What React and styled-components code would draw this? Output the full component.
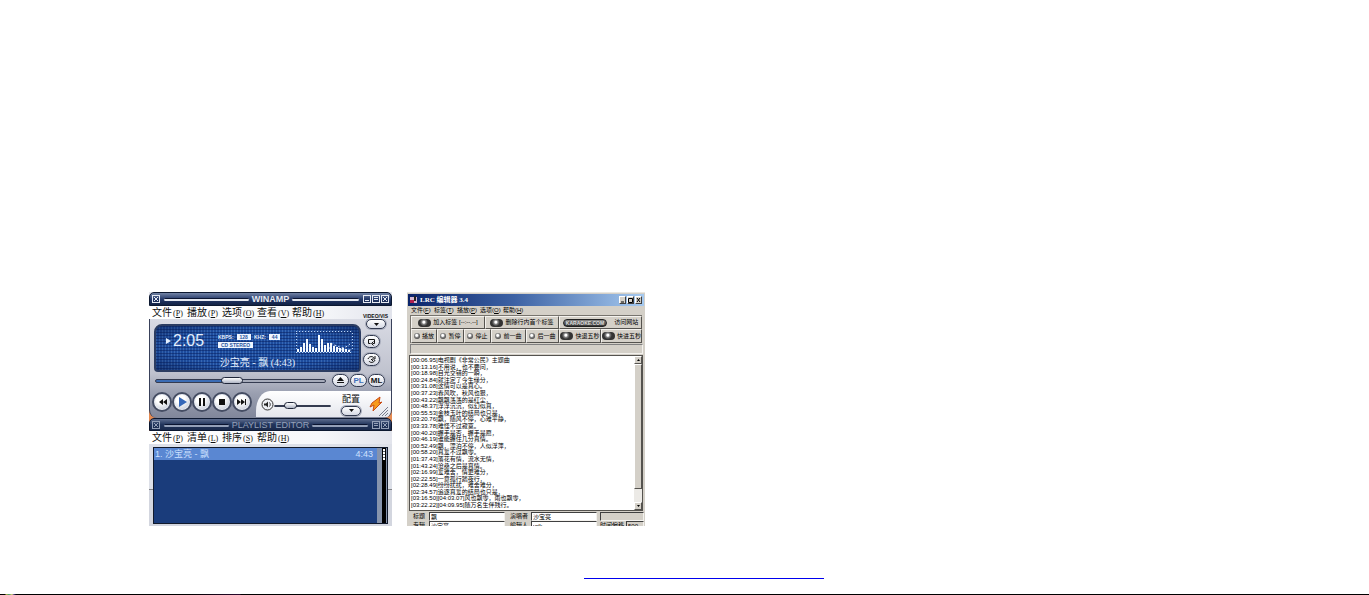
import React from 'react';
import styled, { createGlobalStyle } from 'styled-components';

const GlobalStyle = createGlobalStyle`
  * {
    box-sizing: border-box;
  }
  body {
    margin: 0;
    background-color: #FFF;
  }
  button {
    margin: 0;
    padding: 0;
    border: 0;
    background: none;
    font: inherit;
    color: inherit;
    cursor: pointer;
  }
`;

const Page = styled.div`
  min-height: 100vh;
  display: flex;
  flex-direction: column;
`;

const Gallery = styled.main`
  display: flex;
  gap: 15px;
  padding: 292px 110px 0 149px;
`;

const PageFooter = styled.footer`
  display: flex;
  justify-content: center;
  padding: 36px 110px 0 149px;
`;

const FooterLink = styled.a`
  width: 240px;
  height: 17px;
  border-bottom: 1px solid #0000EE;
`;

const BottomLine = styled.div`
  height: 1px;
  margin-top: auto;
  background:
    linear-gradient(90deg, transparent 5px, #B7A53A 6px, #3E9A6C 9px, #D8D070 12px, #4A3A8A 14px, transparent 16px),
    linear-gradient(90deg, #000 190px, #2A0A2E 240px, #000 241px);
`;

/* player */

const Player = styled.section`
  flex: 0 0 243px;
  height: 234px;
  display: grid;
  grid-template-rows: 14px 13px 99px 13px 13px 1fr;
  overflow: hidden;
  background: linear-gradient(#E3E5EC 60px, #E48A52 60px);
  font-family: 'Liberation Serif', 'Noto Sans CJK SC', serif;
  font-size: 10px;
  color: #111;
`;

const TitleBar = styled.header`
  display: grid;
  grid-template-columns: 1fr auto 1fr;
  align-items: center;
  gap: 3px;
  padding: 0 2px;
  border: 1px solid #0C1830;
  border-radius: 5px 5px 0 0;
  background: ${props => props.dim ?
    'linear-gradient(#5C6C8E, #22355C 50%, #1A2A4C)' :
    'linear-gradient(#7384A6, #25396A 50%, #122244)'};
  color: ${props => props.dim ? '#94A0B8' : '#E6EAF2'};
`;

const TitleSide = styled.div`
  display: flex;
  align-items: center;
  gap: 4px;
`;

const TitleText = styled.h2`
  margin: 0;
  font-family: 'Liberation Sans', sans-serif;
  font-size: 9px;
  line-height: 12px;
  font-weight: ${props => props.dim ? 'normal' : 'bold'};
`;

const TitleRule = styled.span`
  flex: 1;
  height: 3px;
  border-radius: 2px;
  border-top: 1px solid #0A1430;
  background-color: currentColor;
`;

const TitleButton = styled.button`
  display: flex;
`;

const TitleButtons = styled.div`
  display: flex;
  gap: 1px;
`;

const MenuRow = styled.div`
  display: flex;
  justify-content: space-between;
  background: linear-gradient(90deg, #FFF, #F6F7FA 70%, #E2E4EC);
`;

const Menu = styled.nav`
  display: grid;
  grid-template-columns: repeat(5, 35px);
  padding-left: 3px;
  line-height: 13px;

  span {
    margin-left: 1px;
    font-size: 8px;
  }
`;

const MenuButton = styled.button`
  text-align: left;
  white-space: nowrap;
`;

const VideoLabel = styled.span`
  align-self: end;
  padding-right: 4px;
  font-family: 'Liberation Sans', sans-serif;
  font-size: 5px;
  line-height: 6px;
  font-weight: bold;
`;

const Body = styled.div`
  display: grid;
  grid-template-rows: 53px 17px 29px;
  overflow: hidden;
  border: solid #39415A;
  border-width: 0 1px;
  border-radius: 0 0 8px 8px;
  background: linear-gradient(#D9DBE4, #BFC2CE 55%, #9A9FB0 75%, #80869A);
`;

const Upper = styled.div`
  display: grid;
  grid-template-columns: 1fr 30px;
`;

const Display = styled.div`
  display: grid;
  grid-template-columns: 58px 1fr 66px;
  grid-template-rows: 30px 14px;
  margin: 5px 0 0 4px;
  border: 2px solid #2C3D62;
  border-radius: 8px 8px 4px 4px;
  background-color: #1D4C9E;
  background-image:
    radial-gradient(ellipse, transparent 60%, rgba(8, 24, 70, .5)),
    linear-gradient(rgba(6, 28, 90, .5) 1px, transparent 1px),
    linear-gradient(90deg, rgba(80, 130, 200, .5) 1px, transparent 1px);
  background-size: auto, 3px 3px, 3px 3px;
  color: #E4F0FF;
`;

const Clock = styled.div`
  display: flex;
  align-items: center;
  gap: 2px;
  padding-left: 10px;
  font-family: 'Liberation Sans', sans-serif;
  font-size: 16px;
  line-height: 18px;
`;

const Rates = styled.div`
  display: grid;
  align-content: center;
  gap: 2px;
  padding-left: 4px;
  font-family: 'Liberation Sans', sans-serif;
  font-size: 5px;
  line-height: 6px;
  font-weight: bold;
`;

const RateLine = styled.div`
  display: flex;
  gap: 3px;
  white-space: nowrap;
`;

const Chip = styled.span`
  padding: 0 3px;
  background-color: #F0F6FF;
  color: #2A55A0;
`;

const Scope = styled.div`
  padding-top: 4px;
`;

const Track = styled.div`
  grid-column: 1 / -1;
  text-align: center;
  line-height: 13px;
`;

const Side = styled.div`
  display: flex;
  flex-direction: column;
  align-items: center;
  gap: 6px;
`;

const SideGroup = styled.div`
  align-self: start;
  display: grid;
  gap: 5px;
  padding-left: 2px;
`;

const PillButton = styled.button`
  width: ${props => props.wide ? '20px' : '17px'};
  height: ${props => props.wide ? '10px' : '13px'};
  display: flex;
  align-items: center;
  justify-content: center;
  border: 1px solid #30384E;
  border-radius: 7px;
  background: linear-gradient(#FFF, #D5D9E4);
  box-shadow: 0 0 0 1px #A9AEBD;
  font-family: 'Liberation Sans', sans-serif;
  font-size: 8px;
  line-height: 8px;
  font-weight: bold;
  color: ${props => props.blue ? '#3F6EB8' : '#111'};
`;

const SeekRow = styled.div`
  display: grid;
  grid-template-columns: 1fr auto;
  align-items: center;
  gap: 6px;
  padding: 0 6px 0 5px;
`;

const Slider = styled.input`
  width: 100%;
  height: 10px;
  margin: 0;
  appearance: none;
  background: none;

  &::-webkit-slider-runnable-track {
    height: ${props => props.seek ? '4px' : '2px'};
    border: 1px solid #343B50;
    border-radius: 2px;
    background: ${props => props.seek ?
      'linear-gradient(90deg, #3B6CB4 45%, #A6ABBA 45%)' :
      '#343B50'};
  }
  &::-webkit-slider-thumb {
    appearance: none;
    width: ${props => props.seek ? '22px' : '13px'};
    height: 7px;
    margin-top: ${props => props.seek ? '-3px' : '-4px'};
    border: 1px solid #20273A;
    border-radius: 4px;
    background: linear-gradient(#FFF, #AEB4C4);
  }
`;

const PillGroup = styled.div`
  display: flex;
  gap: 1px;
`;

const Controls = styled.div`
  display: grid;
  grid-template-columns: 106px 1fr;
`;

const Transport = styled.div`
  display: flex;
  align-items: center;
  padding: 0 0 4px 2px;
`;

const RoundButton = styled.button`
  width: 20px;
  height: 20px;
  flex: none;
  display: flex;
  align-items: center;
  justify-content: center;
  border: 2px solid #454D63;
  border-radius: 50%;
  background: radial-gradient(circle at 40% 30%, #FFF 30%, #AEB6C8);
  box-shadow: inset 0 0 0 1px #E9ECF3;
`;

const Tray = styled.div`
  display: grid;
  grid-template-columns: 13px 57px 30px 1fr;
  align-items: center;
  margin: 2px 0 1px;
  padding-left: 5px;
  border-top-left-radius: 14px 20px;
  background: linear-gradient(#FFF, #E4E6ED);
`;

const VolumeBox = styled.div`
  padding-top: 6px;
`;

const Config = styled.div`
  display: flex;
  flex-direction: column;
  align-items: center;
  padding-left: 10px;
  font-size: 9px;
  line-height: 13px;
  white-space: nowrap;
`;

const PlaylistFrame = styled.div`
  padding: 3px 4px 0;
  background: linear-gradient(#DDE0E8 45px, #333 45px, #D3D6DF 46px);
`;

const Playlist = styled.div`
  height: 77px;
  display: grid;
  grid-template-columns: 1fr 10px;
  border: 1px solid #111A2C;
  background-color: #1A3C7B;
`;

const Songs = styled.ol`
  margin: 0;
  padding: 0;
  list-style: none;
  font-family: 'Liberation Sans', 'Noto Sans CJK SC', sans-serif;
  font-size: 9px;
  line-height: 12px;
`;

const Song = styled.li`
  display: flex;
  justify-content: space-between;
  padding: 0 4px 0 1px;
  background-color: #5A87D2;
  color: #CFE2FF;
`;

const PlaylistScroll = styled.div`
  border-left: 5px solid #8794AC;
  border-right: 1px solid #8794AC;
  background-color: #000;
`;

const PlaylistThumb = styled.div`
  height: 13px;
  border: 1px solid #000;
  background: repeating-linear-gradient(#FFF 0 2px, #59616F 2px 3px);
`;

/* lyrics editor */

const Editor = styled.section`
  flex: 0 0 238px;
  height: 234px;
  display: grid;
  grid-template-columns: 100%;
  grid-template-rows: 12px 9px 28px 12px 156px 9px 9px;
  overflow: hidden;
  padding: 1px 1px 0;
  border-top: 1px solid #E9E7E1;
  background-color: #D4D0C8;
  font-family: 'Liberation Sans', 'Noto Sans CJK SC', sans-serif;
  font-size: 6px;
  line-height: 9px;
  color: #000;
`;

const EditorTitle = styled.header`
  display: flex;
  align-items: center;
  gap: 3px;
  padding: 0 2px;
  background: linear-gradient(90deg, #0A246A, #3D62A4 45%, #A6CAF0);
  color: #FFF;
`;

const EditorName = styled.h2`
  flex: 1;
  margin: 0;
  font-family: 'Liberation Serif', 'Noto Sans CJK SC', serif;
  font-size: 7px;
  line-height: 11px;
`;

const WindowButton = styled.button`
  width: 7px;
  height: 8px;
  display: flex;
  border: 1px solid;
  border-color: #FFF #404040 #404040 #FFF;
  background-color: #D4D0C8;
`;

const EditorMenu = styled.nav`
  display: grid;
  grid-template-columns: repeat(5, 23px);
  padding-left: 3px;
`;

const Toolbar = styled.div`
  display: grid;
  grid-template-rows: 13px 14px;
  margin: 0 2px;
  border: 1px solid #77746E;
  border-width: 1px 0 0 1px;
`;

const ToolRow = styled.div`
  display: grid;
  grid-template-columns: ${props => props.columns};
`;

const Tool = styled.button`
  min-width: 0;
  display: flex;
  align-items: center;
  justify-content: center;
  gap: 2px;
  border: 1px solid;
  border-color: #F4F2EE #55534F #55534F #F4F2EE;
  white-space: nowrap;
`;

const Knob = styled.span`
  flex: none;
  width: ${props => props.wide ? '13px' : '6px'};
  height: ${props => props.wide ? '8px' : '6px'};
  border-radius: 4px;
  background: radial-gradient(circle at 45% 40%, #FFF 1px, #8A8A8A 2px, #333 4px);
`;

const Badge = styled.span`
  margin-right: 5px;
  padding: 0 2px;
  border: 1px solid #222;
  border-radius: 4px;
  background: linear-gradient(#888, #333);
  font-size: 5px;
  line-height: 6px;
  font-weight: bold;
  color: #DDD;
`;

const Status = styled.div`
  margin: 1px 1px 1px 2px;
  border: 1px solid;
  border-color: #808080 #F4F2EE #F4F2EE #808080;
`;

const EditArea = styled.div`
  display: grid;
  grid-template-columns: 1fr 8px;
  margin: 0 1px;
  border: 1px solid #55534F;
  background-color: #FFF;
`;

const Lyrics = styled.textarea`
  display: block;
  width: 100%;
  height: 100%;
  margin: 0;
  padding: 1px 0 0 1px;
  border: 0;
  outline: 0;
  resize: none;
  overflow: hidden;
  background: none;
  font-family: 'Liberation Sans', 'Noto Sans CJK SC', sans-serif;
  font-size: 6px;
  line-height: 1.1;
  white-space: pre;
  color: #000;
`;

const Scroll = styled.div`
  display: grid;
  grid-template-rows: 8px 125px 1fr 8px;
  background-color: #ECEAE6;
`;

const ScrollButton = styled.button`
  display: flex;
  align-items: center;
  justify-content: center;
  border: 1px solid;
  border-color: #FFF #55534F #55534F #FFF;
  background-color: #D4D0C8;
`;

const ScrollThumb = styled.div`
  border: 1px solid;
  border-color: #FFF #55534F #55534F #FFF;
  background-color: #D4D0C8;
`;

const FieldRow = styled.div`
  display: grid;
  grid-template-columns: 21px 76px 26px 66px 1fr;
  padding-top: 1px;
`;

const FieldLabel = styled.label`
  padding-left: 5px;
  line-height: 8px;
  white-space: nowrap;
`;

const Field = styled.input`
  width: 100%;
  min-width: 0;
  height: 9px;
  margin: 0;
  padding: 0 1px;
  border: 1px solid;
  border-color: #404040 #F4F2EE #F4F2EE #404040;
  border-radius: 0;
  background-color: ${props => props.flat ? '#D4D0C8' : '#FFF'};
  font: inherit;
  line-height: 7px;
`;

const Extra = styled.div`
  display: grid;
  grid-template-columns: ${props => props.labelled ? '26px 1fr' : '1fr'};
  padding-left: 3px;
  line-height: 8px;
`;

const lyrics = `[00:06.95]电视剧《非常公民》主题曲
[00:13.16]不用说，也不要问，
[00:18.98]目光交错的一瞬，
[00:24.84]就注定了今生缘分，
[00:31.08]这情可以是真心。
[00:37.23]春风吹，秋风也狠，
[00:43.22]飘飘荡荡的是红尘，
[00:48.37]浮浮沉沉，似幻似真，
[00:55.53]金枝玉叶的结局也只是，
[03:20.76]飘，随风不停，心难平静，
[03:33.78]难怪不过寂寞。
[00:40.20]握手是否，握手是愿，
[00:46.19]谁能握住几分真情。
[00:52.49]飘，漂泊不停，人似浮萍，
[00:58.20]真爱不过飘零。
[01:37.43]落花有情，流水无情，
[01:43.24]沧桑之后是真情。
[02:16.99]爱难舍，情更难分，
[02:22.55]一意孤行踏夜行，
[02:28.49]纷纷扰扰，难舍难分，
[02:34.57]追逐真爱的结局也只是，
[03:16.50][04:03.07]风也飘零，雨也飘零，
[03:22.22][04:09.95]随万名生伴残行。`;

const bars = [3, 5, 9, 13, 8, 5, 4, 17, 13, 7, 9, 9, 6, 5, 4, 4, 3, 2];

const MenuItems = ({ items }) => items.map(([text, key]) => (
  <MenuButton key={text}>{text}<span>(<u>{key}</u>)</span></MenuButton>
));

const Arrow = () => (
  <svg width="5" height="3"><path d="M0 0h5L2.5 3z" fill="currentColor"/></svg>
);

const BoxIcon = ({ path }) => (
  <svg width="8" height="8" fill="none" stroke="currentColor">
    <rect x=".5" y=".5" width="7" height="7"/>
    <path d={path}/>
  </svg>
);

const Spectrum = () => (
  <svg width="62" height="24" fill="#F4FAFF">
    <path d="M3 1.5h56M3.5 3v18M59.5 3v18M3 22.5h56" stroke="#BBD3F4" strokeDasharray="1 2"/>
    <path d="M34 14l4-1 3 2 4 1 3 2 5-1 4-3M36 18h8l5 2h9" fill="none" stroke="#DCE9FF" strokeDasharray="2 2"/>
    {bars.map((height, i) => (
      <rect key={i} x={4 + i * 3} y={22 - height} width="2" height={height}/>
    ))}
  </svg>
);

const transport = [
  ['previous', 'M6 2v6L2 5zM10 2v6L6 5z', '#111'],
  ['play', 'M2 0l8 5-8 5z', '#3567B8'],
  ['pause', 'M2 1h2v8H2zM6 1h2v8H6z', '#111'],
  ['stop', 'M2 2h6v6H2z', '#111'],
  ['next', 'M0 2l4 3-4 3zM4 2l4 3-4 3zM8 2h1v6H8z', '#111']
];

const PlayerWindow = () => (
  <Player>
    <TitleBar>
      <TitleSide>
        <TitleButton aria-label="menu"><BoxIcon path="M2 2l4 4M6 2L2 6"/></TitleButton>
        <TitleRule/>
      </TitleSide>
      <TitleText>WINAMP</TitleText>
      <TitleSide>
        <TitleRule/>
        <TitleButtons>
          <TitleButton aria-label="minimize"><BoxIcon path="M2 5.5h4"/></TitleButton>
          <TitleButton aria-label="shade"><BoxIcon path="M2 2.5h4M2 4.5h4"/></TitleButton>
          <TitleButton aria-label="close"><BoxIcon path="M2 2l4 4M6 2L2 6"/></TitleButton>
        </TitleButtons>
      </TitleSide>
    </TitleBar>
    <MenuRow>
      <Menu>
        <MenuItems items={[['文件', 'P'], ['播放', 'P'], ['选项', 'O'], ['查看', 'V'], ['帮助', 'H']]}/>
      </Menu>
      <VideoLabel>VIDEO/VIS</VideoLabel>
    </MenuRow>
    <Body>
      <Upper>
        <Display>
          <Clock>
            <svg width="5" height="6"><path d="M0 0l5 3-5 3z" fill="currentColor"/></svg>
            2:05
          </Clock>
          <Rates>
            <RateLine>KBPS: <Chip>128</Chip> KHZ: <Chip>44</Chip></RateLine>
            <RateLine><Chip>CD STEREO</Chip></RateLine>
          </Rates>
          <Scope><Spectrum/></Scope>
          <Track>沙宝亮 - 飘 (4:43)</Track>
        </Display>
        <Side>
          <PillButton wide aria-label="video"><Arrow/></PillButton>
          <SideGroup>
            <PillButton aria-label="repeat">
              <svg width="9" height="8" fill="none" stroke="currentColor"><path d="M3.500 5.500h-2v-4h6v4h-2M6.500 3.500l-2 2 2 2"/></svg>
            </PillButton>
            <PillButton aria-label="shuffle">
              <svg width="9" height="9" fill="none" stroke="currentColor"><path d="M1 4C2 1 6 1 7 3M8 1v3H5M8 5C7 8 3 8 2 6M4 4l2 2"/></svg>
            </PillButton>
          </SideGroup>
        </Side>
      </Upper>
      <SeekRow>
        <Slider seek type="range" aria-label="position" defaultValue="44"/>
        <PillGroup>
          <PillButton aria-label="eject">
            <svg width="7" height="7" fill="currentColor"><path d="M3.500 0L7 4H0zM0 5h7v1H0z"/></svg>
          </PillButton>
          <PillButton blue>PL</PillButton>
          <PillButton>ML</PillButton>
        </PillGroup>
      </SeekRow>
      <Controls>
        <Transport>
          {transport.map(([name, path, color]) => (
            <RoundButton key={name} aria-label={name}>
              <svg width="10" height="10"><path d={path} fill={color}/></svg>
            </RoundButton>
          ))}
        </Transport>
        <Tray>
          <svg width="13" height="13" fill="none" stroke="#333">
            <circle cx="6.5" cy="6.5" r="5.5" fill="#EEF0F5"/>
            <path d="M3 5.5h2l2-2v6l-2-2H3z" fill="#222" stroke="none"/>
            <path d="M8.5 4.5c1 1 1 3 0 4"/>
          </svg>
          <VolumeBox>
            <Slider type="range" aria-label="volume" defaultValue="22"/>
          </VolumeBox>
          <Config>
            配置
            <PillButton wide aria-label="config"><Arrow/></PillButton>
          </Config>
          <svg width="28" height="26" viewBox="0 0 28 26">
            <path d="M11 12l8-6-1 6 3-1-9 9 1-6-4 2z" fill="#F79A1C" stroke="#C94A12"/>
            <path d="M18 25l9-9M21 25l6-6M24 25l3-3" stroke="#777D8D"/>
          </svg>
        </Tray>
      </Controls>
    </Body>
    <TitleBar dim>
      <TitleSide>
        <TitleButton aria-label="playlist menu"><BoxIcon path="M2 2l4 4M6 2L2 6"/></TitleButton>
        <TitleRule/>
      </TitleSide>
      <TitleText dim>PLAYLIST EDITOR</TitleText>
      <TitleSide>
        <TitleRule/>
        <TitleButtons>
          <TitleButton aria-label="shade playlist"><BoxIcon path="M2 2.5h4M2 4.5h4"/></TitleButton>
          <TitleButton aria-label="close playlist"><BoxIcon path="M2 2l4 4M6 2L2 6"/></TitleButton>
        </TitleButtons>
      </TitleSide>
    </TitleBar>
    <MenuRow>
      <Menu>
        <MenuItems items={[['文件', 'P'], ['清单', 'L'], ['排序', 'S'], ['帮助', 'H']]}/>
      </Menu>
    </MenuRow>
    <PlaylistFrame>
      <Playlist>
        <Songs>
          <Song><span>1. 沙宝亮 - 飘</span><span>4:43</span></Song>
        </Songs>
        <PlaylistScroll><PlaylistThumb/></PlaylistScroll>
      </Playlist>
    </PlaylistFrame>
  </Player>
);

const EditorWindow = () => (
  <Editor>
    <EditorTitle>
      <svg width="7" height="8"><path d="M0 1h7v6H0z" fill="#D8B8D0"/><path d="M0 4h4v3H0z" fill="#B02050"/><path d="M4 0h2v5H4z" fill="#222"/></svg>
      <EditorName>LRC 编辑器 3.4</EditorName>
      <TitleButtons>
        <WindowButton aria-label="minimize editor"><svg width="5" height="6"><path d="M1 5h3" stroke="#000"/></svg></WindowButton>
        <WindowButton aria-label="maximize editor"><svg width="5" height="6"><path d="M.5 1.5h4v4h-4z" fill="none" stroke="#000"/></svg></WindowButton>
        <WindowButton aria-label="close editor"><svg width="5" height="6"><path d="M1 1l3 4M4 1L1 5" stroke="#000"/></svg></WindowButton>
      </TitleButtons>
    </EditorTitle>
    <EditorMenu>
      <MenuItems items={[['文件', 'F'], ['标签', 'T'], ['播放', 'P'], ['选项', 'O'], ['帮助', 'H']]}/>
    </EditorMenu>
    <Toolbar>
      <ToolRow columns="74px 74px 1fr">
        <Tool><Knob wide/>加入标签 [--:--.--]</Tool>
        <Tool><Knob wide/>删除行内首个标签</Tool>
        <Tool><Badge>KARAOKE.COM</Badge>访问网站</Tool>
      </ToolRow>
      <ToolRow columns="26px 27px 27px 35px 33px 42px 1fr">
        {['播放', '暂停', '停止', '前一曲', '后一曲'].map(text => (
          <Tool key={text}><Knob/>{text}</Tool>
        ))}
        <Tool><Knob wide/>快退五秒</Tool>
        <Tool><Knob wide/>快进五秒</Tool>
      </ToolRow>
    </Toolbar>
    <Status/>
    <EditArea>
      <Lyrics aria-label="lyrics" spellCheck="false" defaultValue={lyrics}/>
      <Scroll>
        <ScrollButton aria-label="scroll up"><svg width="3" height="2"><path d="M0 2h3L1.5 0z"/></svg></ScrollButton>
        <ScrollThumb/>
        <span/>
        <ScrollButton aria-label="scroll down"><svg width="3" height="2"><path d="M0 0h3L1.5 2z"/></svg></ScrollButton>
      </Scroll>
    </EditArea>
    <FieldRow>
      <FieldLabel htmlFor="title">标题</FieldLabel>
      <Field id="title" defaultValue="飘"/>
      <FieldLabel htmlFor="singer">演唱者</FieldLabel>
      <Field id="singer" defaultValue="沙宝亮"/>
      <Extra><Field flat readOnly aria-label="file"/></Extra>
    </FieldRow>
    <FieldRow>
      <FieldLabel htmlFor="album">专辑</FieldLabel>
      <Field id="album" defaultValue="沙宝亮"/>
      <FieldLabel htmlFor="author">编辑人</FieldLabel>
      <Field id="author" defaultValue="vrik"/>
      <Extra labelled>
        <label htmlFor="offset">时间偏移</label>
        <Field flat id="offset" defaultValue="500"/>
      </Extra>
    </FieldRow>
  </Editor>
);

export default function App() {
  return (
    <Page>
      <GlobalStyle/>
      <Gallery>
        <PlayerWindow/>
        <EditorWindow/>
      </Gallery>
      <PageFooter>
        <FooterLink href="#" aria-label="home"/>
      </PageFooter>
      <BottomLine/>
    </Page>
  );
}
